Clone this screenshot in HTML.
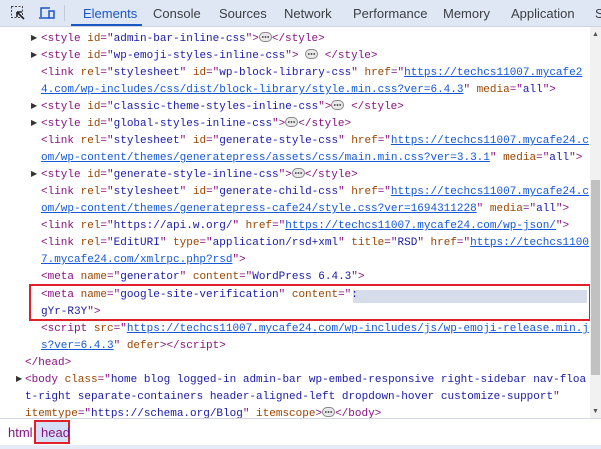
<!DOCTYPE html>
<html><head><meta charset="utf-8"><style>
body{margin:0;width:601px;height:449px;overflow:hidden;background:#fff;font-family:"Liberation Sans",sans-serif;position:relative}
.tabs{position:absolute;left:0;top:0;width:601px;height:26px;background:#dfe7f5;border-bottom:1px solid #cbd5e6}
.tab{position:absolute;top:6px;font-size:13px;color:#3c4043}
.code{position:absolute;left:0;top:29px;width:590px;height:389px;font-family:"Liberation Mono",monospace;font-size:11px}
.l{position:absolute;white-space:pre;line-height:17px;height:17px}
.t{color:#881280}.a{color:#994500}.v{color:#1a1aa6}.u{text-decoration:underline;color:#1558d6}
.tri{position:absolute;font-size:8px;color:#333}
.d{display:inline-block;width:13px;height:10px;vertical-align:-1px}
.sb{position:absolute;left:590px;top:27px;width:11px;height:391px;background:#f1f1f1}
.thumb{position:absolute;left:591px;top:180px;width:9px;height:195px;background:#c1c1c1}
.bc{position:absolute;left:0;top:418px;width:601px;height:27px;border-top:1px solid #d0d7e3;background:#fff;font-size:13px}
</style></head><body>
<svg width="0" height="0" style="position:absolute"><defs><symbol id="dt" viewBox="0 0 13 10"><rect x="0.5" y="0.5" width="12" height="9" rx="4.5" fill="#e8e8e8" stroke="#888"/><circle cx="3.8" cy="5" r="0.9" fill="#333"/><circle cx="6.5" cy="5" r="0.9" fill="#333"/><circle cx="9.2" cy="5" r="0.9" fill="#333"/></symbol></defs></svg>
<div class="tabs">
<svg style="position:absolute;left:10px;top:5px" width="16" height="16" viewBox="0 0 16 16"><rect x="1.5" y="1.5" width="11" height="11" fill="none" stroke="#444" stroke-dasharray="2 1.5"/><path d="M7 7 L14 14 M7 7 L7 12 M7 7 L12 7" stroke="#222" stroke-width="1.6" fill="none"/></svg>
<svg style="position:absolute;left:38px;top:5px" width="18" height="16" viewBox="0 0 18 16"><path d="M3 12 V3 H12 M1 13 H11" stroke="#1a56c4" stroke-width="1.5" fill="none"/><rect x="11" y="6" width="5" height="7" fill="none" stroke="#1a56c4" stroke-width="1.5"/></svg>
<div style="position:absolute;left:64px;top:5px;width:1px;height:16px;background:#c5cbd6"></div>
<div class="tab" style="left:83px;color:#1a56c4">Elements</div>
<div style="position:absolute;left:71px;top:24px;width:71px;height:2px;background:#1a56c4"></div>
<div class="tab" style="left:153px">Console</div>
<div class="tab" style="left:219px">Sources</div>
<div class="tab" style="left:284px">Network</div>
<div class="tab" style="left:353px">Performance</div>
<div class="tab" style="left:443px">Memory</div>
<div class="tab" style="left:511px">Application</div>
<div class="tab" style="left:595px">S</div>
</div>
<div class="code">
<span class="tri" style="left:31px;top:4px">▶</span><div class="l" style="left:41px;top:2px"><span class="t">&lt;style </span><span class="a">id</span><span class="t">="</span><span class="v">admin-bar-inline-css</span><span class="t">"&gt;</span><svg class="d"><use href="#dt"/></svg><span class="t">&lt;/style&gt;</span></div>
<span class="tri" style="left:31px;top:21px">▶</span><div class="l" style="left:41px;top:19px"><span class="t">&lt;style </span><span class="a">id</span><span class="t">="</span><span class="v">wp-emoji-styles-inline-css</span><span class="t">"&gt;</span> <svg class="d"><use href="#dt"/></svg> <span class="t">&lt;/style&gt;</span></div>
<div class="l" style="left:41px;top:36px"><span class="t">&lt;link </span><span class="a">rel</span><span class="t">="</span><span class="v">stylesheet</span><span class="t">" </span><span class="a">id</span><span class="t">="</span><span class="v">wp-block-library-css</span><span class="t">" </span><span class="a">href</span><span class="t">="</span><span class="u">https://techcs11007.mycafe2</span></div>
<div class="l" style="left:41px;top:53px"><span class="u">4.com/wp-includes/css/dist/block-library/style.min.css?ver=6.4.3</span><span class="t">" </span><span class="a">media</span><span class="t">="</span><span class="v">all</span><span class="t">"&gt;</span></div>
<span class="tri" style="left:31px;top:72px">▶</span><div class="l" style="left:41px;top:70px"><span class="t">&lt;style </span><span class="a">id</span><span class="t">="</span><span class="v">classic-theme-styles-inline-css</span><span class="t">"&gt;</span><svg class="d"><use href="#dt"/></svg> <span class="t">&lt;/style&gt;</span></div>
<span class="tri" style="left:31px;top:89px">▶</span><div class="l" style="left:41px;top:87px"><span class="t">&lt;style </span><span class="a">id</span><span class="t">="</span><span class="v">global-styles-inline-css</span><span class="t">"&gt;</span><svg class="d"><use href="#dt"/></svg><span class="t">&lt;/style&gt;</span></div>
<div class="l" style="left:41px;top:104px"><span class="t">&lt;link </span><span class="a">rel</span><span class="t">="</span><span class="v">stylesheet</span><span class="t">" </span><span class="a">id</span><span class="t">="</span><span class="v">generate-style-css</span><span class="t">" </span><span class="a">href</span><span class="t">="</span><span class="u">https://techcs11007.mycafe24.c</span></div>
<div class="l" style="left:41px;top:121px"><span class="u">om/wp-content/themes/generatepress/assets/css/main.min.css?ver=3.3.1</span><span class="t">" </span><span class="a">media</span><span class="t">="</span><span class="v">all</span><span class="t">"&gt;</span></div>
<span class="tri" style="left:31px;top:140px">▶</span><div class="l" style="left:41px;top:138px"><span class="t">&lt;style </span><span class="a">id</span><span class="t">="</span><span class="v">generate-style-inline-css</span><span class="t">"&gt;</span><svg class="d"><use href="#dt"/></svg><span class="t">&lt;/style&gt;</span></div>
<div class="l" style="left:41px;top:155px"><span class="t">&lt;link </span><span class="a">rel</span><span class="t">="</span><span class="v">stylesheet</span><span class="t">" </span><span class="a">id</span><span class="t">="</span><span class="v">generate-child-css</span><span class="t">" </span><span class="a">href</span><span class="t">="</span><span class="u">https://techcs11007.mycafe24.c</span></div>
<div class="l" style="left:41px;top:172px"><span class="u">om/wp-content/themes/generatepress-cafe24/style.css?ver=1694311228</span><span class="t">" </span><span class="a">media</span><span class="t">="</span><span class="v">all</span><span class="t">"&gt;</span></div>
<div class="l" style="left:41px;top:189px"><span class="t">&lt;link </span><span class="a">rel</span><span class="t">="</span><span class="v">https://api.w.org/</span><span class="t">" </span><span class="a">href</span><span class="t">="</span><span class="u">https://techcs11007.mycafe24.com/wp-json/</span><span class="t">"&gt;</span></div>
<div class="l" style="left:41px;top:206px"><span class="t">&lt;link </span><span class="a">rel</span><span class="t">="</span><span class="v">EditURI</span><span class="t">" </span><span class="a">type</span><span class="t">="</span><span class="v">application/rsd+xml</span><span class="t">" </span><span class="a">title</span><span class="t">="</span><span class="v">RSD</span><span class="t">" </span><span class="a">href</span><span class="t">="</span><span class="u">https://techcs1100</span></div>
<div class="l" style="left:41px;top:223px"><span class="u">7.mycafe24.com/xmlrpc.php?rsd</span><span class="t">"&gt;</span></div>
<div class="l" style="left:41px;top:240px"><span class="t">&lt;meta </span><span class="a">name</span><span class="t">="</span><span class="v">generator</span><span class="t">" </span><span class="a">content</span><span class="t">="</span><span class="v">WordPress 6.4.3</span><span class="t">"&gt;</span></div>
<div style="position:absolute;left:29px;top:255px;width:562px;height:37px;border:2px solid #e0202a;box-sizing:border-box"></div>
<div style="position:absolute;left:353px;top:261px;width:234px;height:13px;background:#d6dcea"></div>
<div class="l" style="left:41px;top:258px"><span class="t">&lt;meta </span><span class="a">name</span><span class="t">="</span><span class="v">google-site-verification</span><span class="t">" </span><span class="a">content</span><span class="t">="</span><span class="v">:</span></div>
<div class="l" style="left:41px;top:275px"><span class="v">gYr-R3Y</span><span class="t">"&gt;</span></div>
<div class="l" style="left:41px;top:292px"><span class="t">&lt;script </span><span class="a">src</span><span class="t">="</span><span class="u">https://techcs11007.mycafe24.com/wp-includes/js/wp-emoji-release.min.j</span></div>
<div class="l" style="left:41px;top:309px"><span class="u">s?ver=6.4.3</span><span class="t">" </span><span class="a">defer</span><span class="t">&gt;&lt;/script&gt;</span></div>
<div class="l" style="left:25px;top:326px"><span class="t">&lt;/head&gt;</span></div>
<span class="tri" style="left:16px;top:345px">▶</span><div class="l" style="left:25px;top:343px"><span class="t">&lt;body </span><span class="a">class</span><span class="t">="</span><span class="v">home blog logged-in admin-bar wp-embed-responsive right-sidebar nav-floa</span></div>
<div class="l" style="left:25px;top:360px"><span class="v">t-right separate-containers header-aligned-left dropdown-hover customize-support</span><span class="t">"</span></div>
<div class="l" style="left:25px;top:377px"><span class="a">itemtype</span><span class="t">="</span><span class="v">https://schema.org/Blog</span><span class="t">" </span><span class="a">itemscope</span><span class="t">&gt;</span><svg class="d"><use href="#dt"/></svg><span class="t">&lt;/body&gt;</span></div>
</div>
<div class="sb"></div><div class="thumb"></div>
<div style="position:absolute;left:592px;top:31px;font-size:7px;color:#555">▲</div>
<div style="position:absolute;left:592px;top:408px;font-size:7px;color:#555">▼</div>
<div class="bc">
<span style="position:absolute;left:8px;top:6px;color:#881280">html</span>
<div style="position:absolute;left:34px;top:1px;width:36px;height:24px;background:#d3e0f7;border:2px solid #e0202a;box-sizing:border-box"></div>
<span style="position:absolute;left:41px;top:6px;color:#881280">head</span>
</div>
<div style="position:absolute;left:0;top:445px;width:601px;height:4px;background:#e6ecf7"></div>
</body></html>
